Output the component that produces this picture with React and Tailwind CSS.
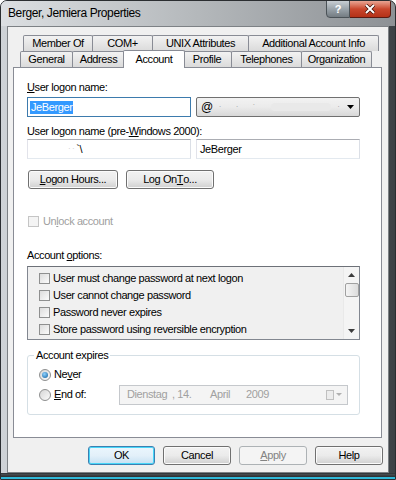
import React from 'react';

const font = { fontFamily: '"Liberation Sans", Arial, sans-serif' };

function U({ children }) {
    return <span className="underline underline-offset-[1px]">{children}</span>;
}

function Tab({ w, children, active }) {
    if (active) {
        return (
            <div className={`${w} h-[18px] -mt-[2px] -mx-[2px] bg-white border border-b-0 border-[#898c95] rounded-t-[2px] relative z-10 flex items-center justify-center -mb-[1px]`}>
                <span className="-mt-[1px]">{children}</span>
            </div>
        );
    }
    return (
        <div className={`${w} h-[16px] border border-b-0 border-[#898c95] -ml-[1px] first:ml-0 rounded-t-[2px] bg-gradient-to-b from-[#f2f2f2] to-[#dbdbdb] flex items-center justify-center`}>
            {children}
        </div>
    );
}

function Btn({ w, children, def, disabled }) {
    const base = `${w} h-[19px] rounded-[3px] flex items-center justify-center`;
    if (disabled) {
        return <div className={`${base} border border-[#adb2b5] bg-[#f4f4f4] text-[#838383]`}>{children}</div>;
    }
    if (def) {
        return (
            <div className={`${base} border border-[#3c7fb1] bg-gradient-to-b from-[#eaf6fd] via-[#e3f0f9] to-[#c6e1f3] shadow-[inset_0_0_0_1px_#48d6f8]`}>
                {children}
            </div>
        );
    }
    return (
        <div className={`${base} border border-[#707070] bg-gradient-to-b from-[#f2f2f2] via-[#ebebeb] to-[#d0d0d0] shadow-[inset_0_0_0_1px_#fbfbfb]`}>
            {children}
        </div>
    );
}

function Check({ disabled }) {
    return (
        <div className={`w-[11px] h-[11px] border ${disabled ? 'border-[#c5c5c5] bg-[#f4f4f4]' : 'border-[#8e8f8f] bg-gradient-to-br from-[#dcdcdc] to-[#fbfbfb]'} shrink-0`} />
    );
}

function Radio({ on }) {
    return (
        <div className="w-[12px] h-[12px] rounded-full border border-[#8e8f8f] bg-gradient-to-br from-[#d6d6d6] to-[#fbfbfb] flex items-center justify-center shrink-0">
            {on && <div className="w-[6px] h-[6px] rounded-full bg-[radial-gradient(circle_at_40%_35%,#8fd3ff,#0e5c9c)]" />}
        </div>
    );
}

export default function App() {
    const options = [
        'User must change password at next logon',
        'User cannot change password',
        'Password never expires',
        'Store password using reversible encryption',
    ];

    return (
        <div
            className="w-[396px] h-[480px] overflow-hidden flex flex-col rounded-t-[7px] border border-[#2b2e31] bg-gradient-to-r from-[#cfd3d7] via-[#9ea2a6] to-[#3c4145] relative text-[11px] tracking-[-0.4px] text-black"
            style={font}
        >
            {/* Title bar */}
            <div className="h-[25px] flex items-center pl-[7px] bg-gradient-to-r from-[#dcdfe2] via-[#b4b8bb] to-[#8d9195] relative">
                <span className="text-[12px] text-black -mt-[2px]">Berger, Jemiera Properties</span>
                <div className="absolute top-[-1px] right-[4px] flex tracking-normal">
                    <div className="w-[24px] h-[18px] rounded-bl-[4px] border border-[#4b5257] bg-gradient-to-b from-[#c8ced3] via-[#9aa3aa] to-[#747c82] flex items-center justify-center text-white font-bold text-[11px]">?</div>
                    <div className="w-[41px] h-[18px] rounded-br-[4px] border border-l-0 border-[#5a1a12] bg-gradient-to-b from-[#e8a493] via-[#c9462c] to-[#b43117] flex items-center justify-center">
                        <svg width="12" height="10" viewBox="0 0 12 10">
                            <path d="M2 1 L10 9 M10 1 L2 9" stroke="#3a0d05" strokeWidth="3.4" />
                            <path d="M2 1 L10 9 M10 1 L2 9" stroke="#ffffff" strokeWidth="2" />
                        </svg>
                    </div>
                </div>
            </div>

            {/* Client area */}
            <div className="mx-[6px] h-[447px] bg-[#f0f0f0] border border-[#7d8185] pt-[8px] px-[5px] flex flex-col">
                {/* Tabs */}
                <div className="flex pl-[10px] h-[16px]">
                    <Tab w="w-[70px]">Member Of</Tab>
                    <Tab w="w-[61px]">COM+</Tab>
                    <Tab w="w-[97px]">UNIX Attributes</Tab>
                    <Tab w="w-[131px]">Additional Account Info</Tab>
                </div>
                <div className="flex pl-[7px] h-[16px] items-end">
                    <Tab w="w-[53px]">General</Tab>
                    <Tab w="w-[53px]">Address</Tab>
                    <Tab w="w-[62px]" active>Account</Tab>
                    <Tab w="w-[50px]">Profile</Tab>
                    <Tab w="w-[71px]">Telephones</Tab>
                    <Tab w="w-[71px]">Organization</Tab>
                </div>

                {/* Panel */}
                <div className="w-[369px] h-[371px] bg-white border border-[#898c95] pl-[13px] pr-[21px] flex flex-col">
                    <div className="mt-[13px] h-[12px] leading-[12px]"><U>U</U>ser logon name:</div>
                    <div className="mt-[4px] flex gap-[5px]">
                        <div className="w-[164px] h-[20px] border border-[#3d7bad] flex items-center px-[2px]">
                            <span className="bg-[#3399ff] text-white leading-[13px] px-[1px]">JeBerger</span>
                        </div>
                        <div className="w-[164px] h-[20px] border border-[#707070] rounded-[2px] bg-gradient-to-b from-[#f2f2f2] via-[#ebebeb] to-[#d8d8d8] flex items-center pl-[4px] pr-[5px]">
                            <span className="text-[12px]">@</span>
                            <span className="text-[#9a9a9a] text-[8px] ml-[6px] tracking-[6px]">· · ˊ</span>
                            <div className="w-[60px] h-[8px] ml-[10px] rounded-full bg-[#e9e9e9]" />
                            <span className="text-[#9a9a9a] text-[8px] ml-[6px]">·</span>
                            <svg className="ml-auto" width="7" height="4" viewBox="0 0 7 4"><path d="M0 0 H7 L3.5 4 Z" fill="#000" /></svg>
                        </div>
                    </div>

                    <div className="mt-[8px] h-[12px] leading-[12px]">User logon name (pre-<U>W</U>indows 2000):</div>
                    <div className="mt-[2px] flex gap-[5px]">
                        <div className="w-[164px] h-[20px] border border-[#abadb3] border-l-[#e2e3ea] border-r-[#dbdfe6] border-b-[#e3e9ef] flex items-center pl-[40px]">
                            <span className="text-[#c8c8c8] text-[8px]">· ·</span><span className="ml-[2px]">`\</span>
                        </div>
                        <div className="w-[164px] h-[20px] border border-[#abadb3] border-l-[#e2e3ea] border-r-[#dbdfe6] border-b-[#e3e9ef] flex items-center pl-[3px]">
                            JeBerger
                        </div>
                    </div>

                    <div className="mt-[11px] flex gap-[8px] pl-[1px]">
                        <Btn w="w-[90px]"><U>L</U>ogon Hours...</Btn>
                        <Btn w="w-[88px]">Log On <U>T</U>o...</Btn>
                    </div>

                    <div className="mt-[24px] flex items-center gap-[4px] pl-[1px] text-[#a0a0a0]">
                        <Check disabled />
                        <span>Un<U>l</U>ock account</span>
                    </div>

                    <div className="mt-[19px] h-[12px] leading-[12px]">Account <U>o</U>ptions:</div>
                    <div className="mt-[5px] h-[74px] border border-[#828790] border-t-[#6d7178] bg-[#f0f0f0] flex">
                        <div className="flex-1 pt-[3px] pl-[11px] flex flex-col">
                            {options.map((o) => (
                                <div key={o} className="h-[17px] flex items-center gap-[3px]">
                                    <Check />
                                    <span>{o}</span>
                                </div>
                            ))}
                        </div>
                        <div className="w-[16px] bg-[#f4f4f4] border-l border-[#e9e9e9] flex flex-col items-center">
                            <svg className="mt-[6px]" width="7" height="4" viewBox="0 0 7 4"><path d="M0 4 H7 L3.5 0 Z" fill="#3c3c3c" /></svg>
                            <div className="mt-[6px] w-[14px] h-[14px] border border-[#a0a0a0] rounded-[2px] bg-gradient-to-r from-[#f4f4f4] to-[#dcdcdc]" />
                            <svg className="mt-auto mb-[6px]" width="7" height="4" viewBox="0 0 7 4"><path d="M0 0 H7 L3.5 4 Z" fill="#3c3c3c" /></svg>
                        </div>
                    </div>

                    {/* Account expires group */}
                    <div className="mt-[15px] h-[60px] border border-[#d5dfe5] rounded-[3px] relative pt-[12px] pl-[11px]">
                        <span className="absolute -top-[7px] left-[6px] bg-white px-[2px] leading-[13px]">Account expires</span>
                        <div className="flex items-center gap-[3px] h-[14px]">
                            <Radio on />
                            <span>Ne<U>v</U>er</span>
                        </div>
                        <div className="mt-[3px] flex items-center">
                            <div className="flex items-center gap-[3px] w-[80px]">
                                <Radio />
                                <span><U>E</U>nd of:</span>
                            </div>
                            <div className="w-[229px] h-[20px] border border-[#c5c8cc] bg-[#f4f4f4] flex items-center pl-[7px] pr-[5px] text-[#a0a0a0]">
                                <span className="w-[45px]">Dienstag</span>
                                <span className="w-[38px]">, 14.</span>
                                <span className="w-[36px]">April</span>
                                <span>2009</span>
                                <div className="ml-auto flex items-center gap-[2px]">
                                    <div className="w-[8px] h-[10px] border border-[#c0c0c0] bg-[#ececec]" />
                                    <svg width="6" height="3" viewBox="0 0 6 3"><path d="M0 0 H6 L3 3 Z" fill="#b0b0b0" /></svg>
                                </div>
                            </div>
                        </div>
                    </div>
                </div>

                {/* Dialog buttons */}
                <div className="mt-[8px] flex gap-[8px] pl-[75px]">
                    <Btn w="w-[67px]" def>OK</Btn>
                    <Btn w="w-[68px]">Cancel</Btn>
                    <Btn w="w-[68px]" disabled><U>A</U>pply</Btn>
                    <Btn w="w-[68px]">Help</Btn>
                </div>
            </div>
            <div className="flex-1 border-t border-[#33373a] bg-gradient-to-b from-[#4a4f53] to-[#2a2d30] border-b-[2px] border-b-[#2fb8d8]" />
        </div>
    );
}
